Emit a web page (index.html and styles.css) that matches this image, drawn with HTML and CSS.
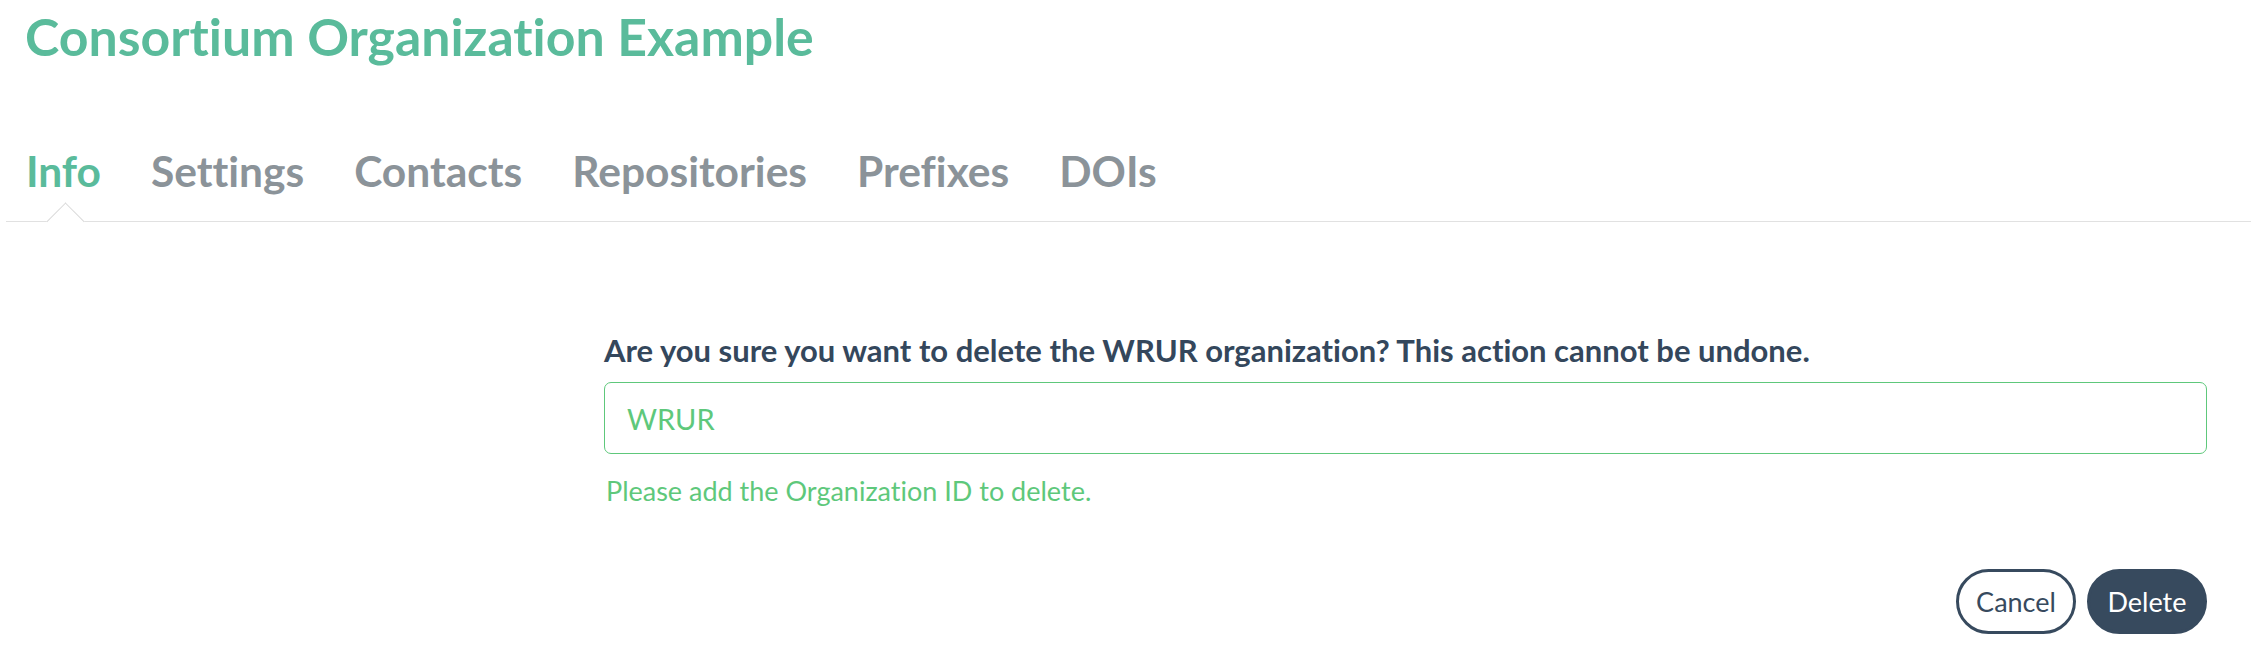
FILE: index.html
```html
<!DOCTYPE html>
<html lang="en">
<head>
<meta charset="utf-8">
<title>Consortium Organization Example</title>
<link rel="stylesheet" href="styles.css">
</head>
<body>
  <header class="page-header">
    <h1 class="title">Consortium Organization Example</h1>
  </header>
  <nav class="tabs">
    <a class="tab active" href="#">Info</a>
    <a class="tab" href="#">Settings</a>
    <a class="tab" href="#">Contacts</a>
    <a class="tab" href="#">Repositories</a>
    <a class="tab" href="#">Prefixes</a>
    <a class="tab" href="#">DOIs</a>
  </nav>
  <main class="content">
    <form class="delete-form">
      <label class="question" for="org-id">Are you sure you want to delete the WRUR organization? This action cannot be undone.</label>
      <input class="id-input" id="org-id" type="text" value="WRUR">
      <p class="help">Please add the Organization ID to delete.</p>
      <div class="actions">
        <button type="button" class="btn btn-outline">Cancel</button>
        <button type="button" class="btn btn-dark">Delete</button>
      </div>
    </form>
  </main>
</body>
</html>
```
FILE: styles.css
```css
* { box-sizing: border-box; }
html, body { margin: 0; padding: 0; background: #fff; }
body {
  font-family: Lato, "Liberation Sans", sans-serif;
  font-variant-ligatures: none;
  width: 2262px;
}
.page-header { padding: 6px 0 0 25px; }
.title {
  margin: 0;
  font-size: 51.8px;
  line-height: 60px;
  font-weight: 700;
  color: #5abb9b;
}
.tabs {
  display: flex;
  gap: 50px;
  margin: 80px 11px 0 6px;
  padding: 0 0 25px 20px;
  border-bottom: 1px solid #e1e1e1;
}
.tab {
  position: relative;
  font-size: 42.5px;
  line-height: 50px;
  font-weight: 700;
  color: #8b9399;
  text-decoration: none;
}
.tab.active { color: #5abb9b; }
.tab.active::after {
  content: "";
  position: absolute;
  left: 50%;
  bottom: -39px;
  width: 26px;
  height: 26px;
  margin-left: -11px;
  background: #fff;
  border-top: 1px solid #d9d9d9;
  border-left: 1px solid #d9d9d9;
  transform: rotate(45deg);
}
.content {
  display: flex;
  padding: 0 55px 0 604px;
}
.delete-form {
  flex: 1;
  display: flex;
  flex-direction: column;
  padding-top: 111px;
}
.question {
  font-size: 31px;
  line-height: 34px;
  font-weight: 700;
  color: #34475c;
}
.id-input {
  margin-top: 15px;
  height: 72px;
  width: 100%;
  border: 1px solid #5ec87b;
  border-radius: 7px;
  padding: 0 22px;
  font-family: Lato, "Liberation Sans", sans-serif;
  font-size: 29px;
  color: #5ec87b;
  outline: none;
}
.help {
  margin: 21px 0 0 2px;
  font-size: 27px;
  line-height: 32px;
  color: #5ec87b;
}
.actions {
  display: flex;
  justify-content: flex-end;
  gap: 11px;
  margin-top: 62px;
}
.btn {
  height: 65px;
  width: 120px;
  border-radius: 33px;
  font-family: Lato, "Liberation Sans", sans-serif;
  font-size: 27px;
  cursor: pointer;
}
.btn-outline {
  background: #fff;
  border: 3px solid #374a5e;
  color: #374a5e;
}
.btn-dark {
  background: #374a5e;
  border: 3px solid #374a5e;
  color: #fff;
}
```
